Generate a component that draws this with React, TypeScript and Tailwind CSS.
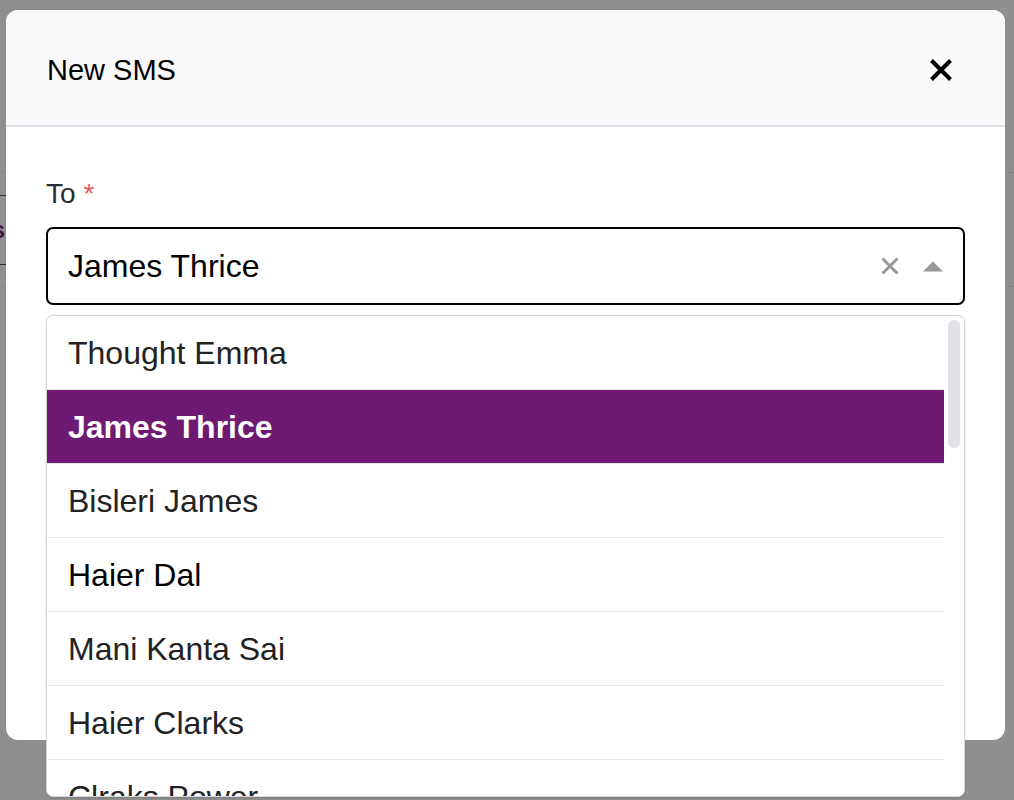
import React from 'react';

const contacts = [
  'Thought Emma',
  'James Thrice',
  'Bisleri James',
  'Haier Dal',
  'Mani Kanta Sai',
  'Haier Clarks',
  'Clraks Power',
  'Emma Watson',
  'Sai Kumar',
];

export default function App() {
  const selected = 'James Thrice';

  return (
    <div className="relative h-[800px] w-full overflow-hidden bg-[#8f8f8f] font-['Liberation_Sans',Arial,sans-serif]">
      {/* dimmed page behind the modal */}
      <div className="pt-[172px]">
        <div className="h-[115px] border-y border-[#848484]">
          <div className="mt-[22px] flex h-[70px] items-center justify-end border-y border-[#4a1f4d] w-[200px] -ml-[194px] pr-[1px]">
            <span className="text-[24px] font-bold text-[#3f1a42]">Contacts</span>
          </div>
        </div>
      </div>

      {/* modal */}
      <div className="absolute left-[6px] top-[10px] h-[730px] w-[999px] rounded-[12px] bg-white">
        <div className="flex h-[117px] items-center justify-between rounded-t-[12px] border-b-2 border-[#e4e4e8] bg-[#f9f9fb] pl-[41px] pr-[52px] pt-[5px]">
          <h1 className="text-[29px] leading-none text-black">New SMS</h1>
          <button className="flex h-[24px] w-[24px] items-center justify-center">
            <svg width="24" height="24" viewBox="0 0 24 24">
              <path d="M2.5 2.5 L21.5 21.5 M21.5 2.5 L2.5 21.5" stroke="#000" strokeWidth="4" strokeLinecap="butt" />
            </svg>
          </button>
        </div>

        <div className="px-[40px] pt-[50px]">
          <label className="flex items-center gap-[8px] text-[28px] leading-[34px] text-[#2e2e33]">
            To <span className="text-[28px] leading-none text-[#e05a5a]">*</span>
          </label>

          <div className="relative mt-[16px]">
            <div className="flex h-[78px] items-center justify-between rounded-[7px] border-2 border-black pl-[20px] pr-[20px]">
              <span className="text-[32px] text-black">James Thrice</span>
              <div className="flex items-center gap-[24px]">
                <svg width="18" height="18" viewBox="0 0 18 18">
                  <path d="M1.5 1.5 L16.5 16.5 M16.5 1.5 L1.5 16.5" stroke="#999" strokeWidth="3" />
                </svg>
                <svg width="20" height="11" viewBox="0 0 20 11">
                  <path d="M10 0.5 L20 10.5 L0 10.5 Z" fill="#999" />
                </svg>
              </div>
            </div>

            {/* dropdown menu */}
            <div className="absolute left-0 right-0 top-full mt-[10px] h-[482px] overflow-hidden rounded-[7px] border border-[#d6d6d6] bg-white shadow-[0_1px_3px_rgba(0,0,0,0.12)]">
              <div className="mr-[20px]">
                {contacts.map(name => (
                  <div
                    key={name}
                    className={`flex h-[74px] items-center border-b border-[#e9e9e9] pl-[21px] text-[32px] ${
                      name === selected
                        ? 'bg-[#6e1a73] font-bold text-white'
                        : name === 'Haier Dal'
                          ? 'text-black'
                          : 'text-[#222]'
                    }`}
                  >
                    {name}
                  </div>
                ))}
              </div>
              <div className="absolute right-[4px] top-[4px] h-[128px] w-[12px] rounded-full bg-[#dfe1e6]" />
            </div>
          </div>
        </div>
      </div>
    </div>
  );
}
